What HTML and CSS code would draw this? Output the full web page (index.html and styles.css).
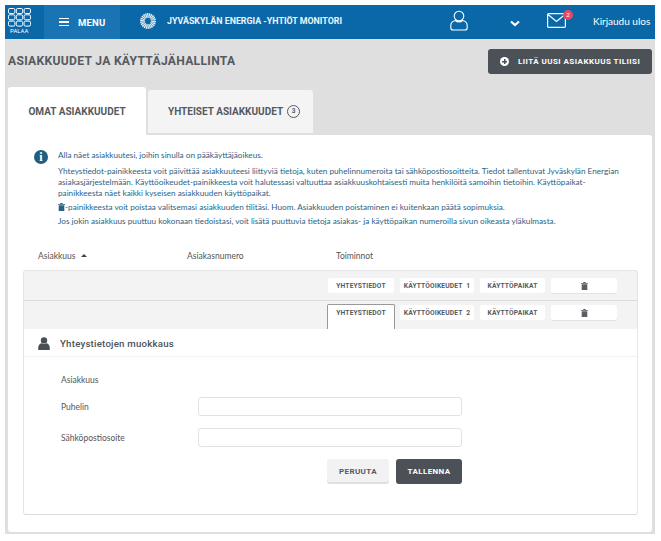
FILE: index.html
```html
<!DOCTYPE html>
<html lang="fi">
<head>
  <meta charset="UTF-8" />
  <title>Asiakkuudet ja käyttäjähallinta</title>
  <link rel="stylesheet" href="styles.css">
</head>
<body>
  <div class="page">
    <!-- Top bar -->
    <header class="topbar">
      <a class="back">
        <svg width="23" height="19" viewBox="0 0 23 19" fill="none" stroke="#fff" stroke-width="1">
          <rect x="0.5" y="0.5" width="6.4" height="5" rx="1.4"/><rect x="8.300" y="0.5" width="6.4" height="5" rx="1.4"/><rect x="16.100" y="0.5" width="6.4" height="5" rx="1.4"/>
          <rect x="0.5" y="6.800" width="6.4" height="5" rx="1.4"/><rect x="8.300" y="6.800" width="6.4" height="5" rx="1.4"/><rect x="16.100" y="6.800" width="6.4" height="5" rx="1.4"/>
          <rect x="0.5" y="13.100" width="6.4" height="5" rx="1.4"/><rect x="8.300" y="13.100" width="6.4" height="5" rx="1.4"/><rect x="16.100" y="13.100" width="6.4" height="5" rx="1.4"/>
        </svg>
        <span>PALAA</span>
      </a>
      <a class="menu">
        <span class="burger"><i></i><i></i><i></i></span>
        MENU
      </a>
      <svg class="logo" width="16" height="16" viewBox="0 0 16 16" fill="none">
        <circle cx="8" cy="8" r="5.400" stroke="#e4eef5" stroke-width="5" stroke-dasharray="1.100 0.400"/>
        <path d="M10 6.200a2.600 2.600 0 1 0 0 3.600" stroke="#0b68a8" stroke-width="1.200"/>
      </svg>
      <span class="brand">JYVÄSKYLÄN ENERGIA -YHTIÖT MONITORI</span>
      <svg class="user" width="18" height="21" viewBox="0 0 18 21" fill="none" stroke="#fff" stroke-width="1.1">
        <circle cx="9" cy="6" r="4.8"/>
        <path d="M5.5 10.5C3 11 0.8 12.5 0.8 15.5v2.2c0 1.4 1 2.3 2.4 2.3h11.6c1.4 0 2.4-.9 2.4-2.3v-2.2c0-3-2.2-4.5-4.7-5-1 1-2.2 1.4-3.5 1.4s-2.5-.4-3.5-1.4z"/>
      </svg>
      <svg class="chevron" width="10" height="7" viewBox="0 0 10 7" fill="none" stroke="#fff" stroke-width="2.2"><path d="M1 1.5l4 3.6 4-3.6"/></svg>
      <span class="mail">
        <svg width="19" height="15" viewBox="0 0 19 15" fill="none" stroke="#fff" stroke-width="1.2">
          <rect x="0.6" y="0.6" width="17.800" height="13.800" rx="1.2"/>
          <path d="M1 1.5l8.5 7 8.5-7"/>
        </svg>
        <b class="badge">2</b>
      </span>
      <a class="logout">Kirjaudu ulos</a>
    </header>

    <main class="content">
      <div class="title-row">
        <h1>ASIAKKUUDET JA KÄYTTÄJÄHALLINTA</h1>
        <button class="add-btn"><span class="plus"></span>LIITÄ UUSI ASIAKKUUS TILIISI</button>
      </div>

      <div class="tabs">
        <div class="tab active">OMAT ASIAKKUUDET</div>
        <div class="tab shared">YHTEISET ASIAKKUUDET <span class="count">3</span></div>
      </div>

      <section class="card">
        <div class="info">
          <span class="info-icon">i</span>
          <div class="info-text">
            <p class="first">Alla näet asiakkuutesi, joihin sinulla on pääkäyttäjäoikeus.</p>
            <p>Yhteystiedot-painikkeesta voit päivittää asiakkuuteesi liittyviä tietoja, kuten puhelinnumeroita tai sähköpostiosoitteita. Tiedot tallentuvat Jyväskylän Energian asiakasjärjestelmään. Käyttöoikeudet-painikkeesta voit halutessasi valtuuttaa asiakkuuskohtaisesti muita henkilöitä samoihin tietoihin. Käyttöpaikat-painikkeesta näet kaikki kyseisen asiakkuuden käyttöpaikat.</p>
            <p><svg class="trash small" viewBox="0 0 8 9"><path d="M0 1.2h2.4L2.8 0h2.4l.4 1.2H8V2H0zM.8 2.6h6.4V9H.8z"/></svg>-painikkeesta voit poistaa valitsemasi asiakkuuden tilitäsi. Huom. Asiakkuuden poistaminen ei kuitenkaan päätä sopimuksia.</p>
            <p>Jos jokin asiakkuus puuttuu kokonaan tiedoistasi, voit lisätä puuttuvia tietoja asiakas- ja käyttöpaikan numeroilla sivun oikeasta yläkulmasta.</p>
          </div>
        </div>

        <div class="table-head">
          <span class="col-a">Asiakkuus <i class="sort"></i></span>
          <span class="col-b">Asiakasnumero</span>
          <span>Toiminnot</span>
        </div>

        <div class="table">
          <div class="row">
            <button class="act">YHTEYSTIEDOT</button>
            <button class="act perm">KÄYTTÖOIKEUDET&nbsp; 1</button>
            <button class="act place">KÄYTTÖPAIKAT</button>
            <button class="act del"><svg class="trash" viewBox="0 0 8 9"><path d="M0 1.2h2.4L2.8 0h2.4l.4 1.2H8V2H0zM.8 2.6h6.4V9H.8z"/></svg></button>
          </div>
          <div class="row open">
            <button class="act current">YHTEYSTIEDOT</button>
            <button class="act perm">KÄYTTÖOIKEUDET&nbsp; 2</button>
            <button class="act place">KÄYTTÖPAIKAT</button>
            <button class="act del"><svg class="trash" viewBox="0 0 8 9"><path d="M0 1.2h2.4L2.8 0h2.4l.4 1.2H8V2H0zM.8 2.6h6.4V9H.8z"/></svg></button>
          </div>

          <div class="edit">
            <div class="edit-head">
              <svg width="12" height="13" viewBox="0 0 12 13" fill="#4a4f55"><circle cx="6" cy="3.4" r="3.2"/><path d="M0.2 12.4c-.3-3.6 1-5.6 3.2-6.2.8.5 1.6.7 2.6.7s1.800-.2 2.600-.7c2.200.6 3.500 2.600 3.200 6.200-.1.400-.4.600-.8.600H1c-.4 0-.7-.2-.8-.6z"/></svg>
              <h2>Yhteystietojen muokkaus</h2>
            </div>
            <form class="edit-form">
              <div class="field static"><label>Asiakkuus</label></div>
              <div class="field"><label>Puhelin</label><input type="text"></div>
              <div class="field"><label>Sähköpostiosoite</label><input type="text"></div>
              <div class="form-actions">
                <button type="button" class="cancel">PERUUTA</button>
                <button type="button" class="save">TALLENNA</button>
              </div>
            </form>
          </div>
        </div>
      </section>
    </main>
  </div>
</body>
</html>
```

FILE: styles.css
```css
* {
  box-sizing: border-box;
}
body {
  margin: 0;
  background: #fff;
  font-family: 'Lato', 'Liberation Sans', sans-serif;
  color: #555;
}
button {
  font-family: 'Roboto', sans-serif;
  border: none;
  cursor: pointer;
}
.page {
  margin: 5px 0 0 5px;
  width: 650px;
}

/* top bar */
.topbar {
  height: 34px;
  background: #0b68a8;
  display: flex;
  align-items: center;
  color: #fff;
}
.back {
  width: 39px;
  height: 34px;
  padding: 3px 0 0 3px;
  display: flex;
  flex-direction: column;
  font-family: 'Roboto', sans-serif;
  font-size: 6px;
}
.back span {
  line-height: 8px;
  padding-left: 2px;
}
.menu {
  width: 76px;
  height: 34px;
  background: #1a74b4;
  display: flex;
  align-items: center;
  padding-left: 15px;
  font-family: 'Roboto', sans-serif;
  font-weight: 700;
  font-size: 9.5px;
  letter-spacing: 0.2px;
  gap: 9px;
}
.burger {
  width: 10px;
  display: flex;
  flex-direction: column;
  gap: 2px;
}
.burger i {
  height: 1.5px;
  background: #fff;
}
.logo {
  margin-left: 20px;
  margin-top: -3px;
}
.brand {
  margin-left: 11px;
  font-family: 'Roboto', sans-serif;
  font-weight: 700;
  font-size: 8.85px;
  width: 283px;
  color: #eef5fa;
  margin-top: -3px;
  white-space: nowrap;
}
.user {
  margin-top: -3px;
}
.chevron {
  margin-left: 42px;
  margin-top: 3px;
}
.mail {
  position: relative;
  margin-left: 27px;
  margin-top: -4px;
  display: flex;
}
.badge {
  position: absolute;
  top: -3px;
  right: -7px;
  width: 10px;
  height: 10px;
  border-radius: 50%;
  background: #e8485c;
  font-size: 6px;
  font-weight: 400;
  line-height: 10px;
  text-align: center;
}
.logout {
  margin-left: 27px;
  font-size: 10px;
  margin-top: -3px;
  white-space: nowrap;
}

/* content */
.content {
  background: #dfdfdf;
  padding: 0 3px 2px 3px;
  height: 495px;
}
.title-row {
  height: 48px;
  display: flex;
  justify-content: space-between;
  align-items: flex-start;
}
h1 {
  margin: 15px 0 0;
  font-family: 'Roboto', sans-serif;
  font-weight: 700;
  font-size: 12.1px;
  letter-spacing: 0.3px;
  line-height: 15px;
  color: #555a5f;
}
.add-btn {
  margin: 10px 0 0 0;
  width: 164px;
  height: 25px;
  background: #4c5157;
  border-radius: 3px;
  color: #fff;
  font-weight: 700;
  font-size: 8px;
  letter-spacing: 0.45px;
  display: flex;
  align-items: center;
  padding-left: 12px;
  gap: 9px;
}
.plus {
  width: 9px;
  height: 9px;
  border-radius: 50%;
  background:
    linear-gradient(#4c5157, #4c5157) center / 5px 1.500px no-repeat,
    linear-gradient(#4c5157, #4c5157) center / 1.500px 5px no-repeat,
    #fff;
}
.tabs {
  display: flex;
  align-items: flex-end;
  gap: 2px;
  height: 48px;
}
.tab {
  width: 165px;
  height: 43px;
  background: #f4f4f4;
  border-radius: 3px 3px 0 0;
  margin-bottom: 2px;
  font-family: 'Roboto', sans-serif;
  font-weight: 700;
  font-size: 10px;
  color: #555a5f;
  display: flex;
  align-items: center;
  justify-content: center;
  gap: 4px;
}
.tab.shared {
  justify-content: flex-start;
  padding-left: 20px;
}
.tab.active {
  width: 138px;
  height: 48px;
  background: #fff;
  margin-bottom: 0;
}
.count {
  width: 13px;
  height: 13px;
  border: 1px solid #555a5f;
  border-radius: 50%;
  font-size: 6.5px;
  line-height: 11px;
  text-align: center;
}
.card {
  background: #fff;
  height: 397px;
  border-radius: 0 3px 3px 3px;
  padding: 0 15px;
}

/* info text */
.info {
  display: flex;
  padding: 15px 0 0 11px;
  height: 115px;
}
.info-icon {
  flex: none;
  width: 14px;
  height: 14px;
  border-radius: 50%;
  background: #1f5f82;
  color: #fff;
  font-family: 'Liberation Serif', serif;
  font-weight: 700;
  font-size: 12px;
  line-height: 14px;
  text-align: center;
  margin-right: 10px;
}
.info-text {
  font-size: 8.2px;
  line-height: 11px;
  color: #2d6284;
  width: 565px;
}
.info-text p {
  margin: 0 0 3.200px;
}
.info-text .first {
  margin-bottom: 4.500px;
}
.trash {
  width: 7px;
  height: 8px;
  fill: #5a5f64;
  display: block;
}
.trash.small {
  display: inline-block;
  vertical-align: -1px;
  fill: #2d6284;
}

/* table */
.table-head {
  display: flex;
  height: 20px;
  font-size: 8.5px;
  line-height: 12px;
  color: #555;
  padding-left: 15px;
}
.col-a {
  width: 149px;
}
.col-b {
  width: 149px;
}
.sort {
  display: inline-block;
  margin-left: 3px;
  vertical-align: 2px;
  border: 3px solid transparent;
  border-top: 0;
  border-bottom: 3px solid #444;
}
.table {
  width: 615px;
}
.row {
  height: 30px;
  background: #f3f3f3;
  border: 1px solid #e6e6e6;
  border-bottom: 0;
  border-radius: 3px 3px 0 0;
  display: flex;
  align-items: center;
  justify-content: flex-end;
  gap: 6px;
  padding-right: 20px;
}
.row.open {
  height: 29px;
  border-top: 1px solid #dcdcdc;
  border-radius: 0;
  align-items: flex-start;
}
.act {
  width: 66px;
  height: 15px;
  background: #fff;
  border-radius: 2px;
  font-weight: 700;
  font-size: 6.7px;
  letter-spacing: 0.15px;
  color: #555a5f;
  padding: 0;
  display: flex;
  align-items: center;
  justify-content: center;
}
.row.open .act {
  margin-top: 4px;
}
.act.perm {
  width: 74px;
}
.act.place {
  width: 65px;
}
.act.del {
  box-shadow: 0 1px 0 #e3e3e3;
}
.row.open .act.current {
  width: 68px;
  height: 25px;
  margin: 3px -1px 0 0;
  border: 1px solid #999;
  border-bottom: 0;
  border-radius: 2px 2px 0 0;
  padding-bottom: 9px;
}

/* edit panel */
.edit {
  height: 186px;
  background: #fff;
  border: 1px solid #e6e6e6;
  border-top: 0;
  border-bottom: 1px solid #dcdcdc;
  border-radius: 0 0 3px 3px;
}
.edit-head {
  height: 28px;
  padding-top: 1px;
  border-bottom: 1px solid #f2f2f2;
  display: flex;
  align-items: center;
  padding-left: 14px;
  gap: 10px;
}
.edit-head h2 {
  margin: 0;
  font-family: 'Roboto', sans-serif;
  font-weight: 500;
  font-size: 9.7px;
  letter-spacing: 0.2px;
  color: #4f545a;
}
.edit-form {
  padding: 0 0 0 37px;
}
.field {
  display: flex;
  align-items: center;
  height: 19px;
  margin-bottom: 12px;
  font-size: 8.5px;
  color: #555;
}
.field.static {
  margin: 13px 0 8px;
  height: 19px;
}
.field label {
  width: 137px;
}
.field input {
  width: 264px;
  height: 19px;
  border: 1px solid #e2e2e2;
  border-radius: 3px;
  background: #fff;
  padding: 0;
}
.form-actions {
  display: flex;
  justify-content: flex-end;
  gap: 7px;
  width: 401px;
  margin-top: 12px;
}
.form-actions button {
  height: 25px;
  border-radius: 3px;
  font-weight: 700;
  font-size: 8px;
  letter-spacing: 0.4px;
}
.cancel {
  width: 62px;
  background: #f2f2f2;
  color: #555a5f;
  box-shadow: inset 0 -2px 0 #e0e0e0;
}
.save {
  width: 66px;
  background: #4c5157;
  color: #fff;
}
```
